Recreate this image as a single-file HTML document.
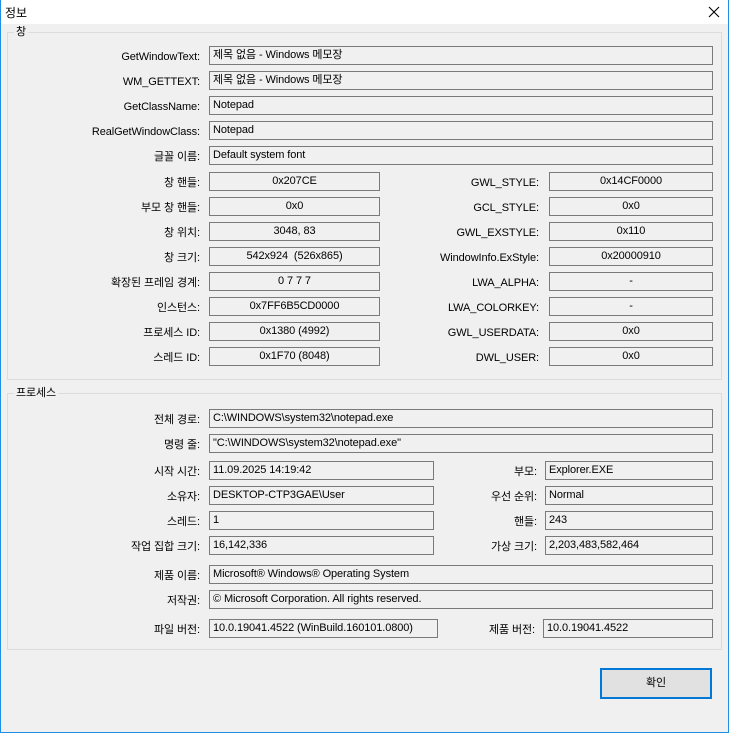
<!DOCTYPE html>
<html><head><meta charset="utf-8"><style>
*{margin:0;padding:0;box-sizing:border-box}
body{width:729px;height:733px;background:#f0f0f0;position:relative;overflow:hidden;font-family:"Liberation Sans","Noto Sans CJK KR",sans-serif;font-size:11px;letter-spacing:-0.1px;color:#000}
.win{position:absolute;left:0;top:0;width:729px;height:733px;border:1px solid #1e90e6;border-top:none}
.title{position:absolute;left:0;top:0;width:729px;height:24px;background:#fff;border-left:1px solid #1e90e6;border-right:1px solid #1e90e6}
.tt{position:absolute;left:4px;top:4px;font-size:12px}
.close{position:absolute;left:707px;top:6px}
.g{position:absolute;border:1px solid #dcdcdc}
.gt{position:absolute;background:#f0f0f0;padding:0 2px;top:-9px;left:6px;line-height:16px}
.f{position:absolute;border:1px solid #7a7a7a;height:19px;line-height:16px;padding-left:3px;white-space:nowrap;overflow:hidden}
.c{text-align:center;padding-left:0}
.l{position:absolute;text-align:right;line-height:16px;white-space:nowrap;margin-top:1px}
.btn{position:absolute;left:600px;top:668px;width:112px;height:31px;border:2px solid #0078d7;background:#e1e1e1;text-align:center;line-height:27px}
</style></head><body>
<div class="title"><span class="tt">정보</span><svg class="close" width="12" height="12" viewBox="0 0 12 12"><path d="M1 1L11 11M11 1L1 11" stroke="#000" stroke-width="1.1" fill="none"/></svg></div>
<div class="win"></div>

<div class="g" style="left:7px;top:32px;width:715px;height:348px"><div class="gt">창</div></div>
<div class="g" style="left:7px;top:393px;width:715px;height:257px"><div class="gt">프로세스</div></div>

<div class="l" style="right:529px;top:48px">GetWindowText:</div><div class="f" style="left:209px;top:46px;width:504px">제목 없음 - Windows 메모장</div>
<div class="l" style="right:529px;top:73px">WM_GETTEXT:</div><div class="f" style="left:209px;top:71px;width:504px">제목 없음 - Windows 메모장</div>
<div class="l" style="right:529px;top:98px">GetClassName:</div><div class="f" style="left:209px;top:96px;width:504px">Notepad</div>
<div class="l" style="right:529px;top:123px">RealGetWindowClass:</div><div class="f" style="left:209px;top:121px;width:504px">Notepad</div>
<div class="l" style="right:529px;top:148px">글꼴 이름:</div><div class="f" style="left:209px;top:146px;width:504px">Default system font</div>

<div class="l" style="right:529px;top:174px">창 핸들:</div><div class="f c" style="left:209px;top:172px;width:171px">0x207CE</div>
<div class="l" style="right:529px;top:199px">부모 창 핸들:</div><div class="f c" style="left:209px;top:197px;width:171px">0x0</div>
<div class="l" style="right:529px;top:224px">창 위치:</div><div class="f c" style="left:209px;top:222px;width:171px">3048, 83</div>
<div class="l" style="right:529px;top:249px">창 크기:</div><div class="f c" style="left:209px;top:247px;width:171px">542x924&nbsp; (526x865)</div>
<div class="l" style="right:529px;top:274px">확장된 프레임 경계:</div><div class="f c" style="left:209px;top:272px;width:171px">0 7 7 7</div>
<div class="l" style="right:529px;top:299px">인스턴스:</div><div class="f c" style="left:209px;top:297px;width:171px">0x7FF6B5CD0000</div>
<div class="l" style="right:529px;top:324px">프로세스 ID:</div><div class="f c" style="left:209px;top:322px;width:171px">0x1380 (4992)</div>
<div class="l" style="right:529px;top:349px">스레드 ID:</div><div class="f c" style="left:209px;top:347px;width:171px">0x1F70 (8048)</div>

<div class="l" style="right:190px;top:174px">GWL_STYLE:</div><div class="f c" style="left:549px;top:172px;width:164px">0x14CF0000</div>
<div class="l" style="right:190px;top:199px">GCL_STYLE:</div><div class="f c" style="left:549px;top:197px;width:164px">0x0</div>
<div class="l" style="right:190px;top:224px">GWL_EXSTYLE:</div><div class="f c" style="left:549px;top:222px;width:164px">0x110</div>
<div class="l" style="right:190px;top:249px">WindowInfo.ExStyle:</div><div class="f c" style="left:549px;top:247px;width:164px">0x20000910</div>
<div class="l" style="right:190px;top:274px">LWA_ALPHA:</div><div class="f c" style="left:549px;top:272px;width:164px">-</div>
<div class="l" style="right:190px;top:299px">LWA_COLORKEY:</div><div class="f c" style="left:549px;top:297px;width:164px">-</div>
<div class="l" style="right:190px;top:324px">GWL_USERDATA:</div><div class="f c" style="left:549px;top:322px;width:164px">0x0</div>
<div class="l" style="right:190px;top:349px">DWL_USER:</div><div class="f c" style="left:549px;top:347px;width:164px">0x0</div>

<div class="l" style="right:529px;top:411px">전체 경로:</div><div class="f" style="left:209px;top:409px;width:504px">C:\WINDOWS\system32\notepad.exe</div>
<div class="l" style="right:529px;top:436px">명령 줄:</div><div class="f" style="left:209px;top:434px;width:504px">"C:\WINDOWS\system32\notepad.exe"</div>
<div class="l" style="right:529px;top:463px">시작 시간:</div><div class="f" style="left:209px;top:461px;width:225px">11.09.2025 14:19:42</div>
<div class="l" style="right:529px;top:488px">소유자:</div><div class="f" style="left:209px;top:486px;width:225px">DESKTOP-CTP3GAE\User</div>
<div class="l" style="right:529px;top:513px">스레드:</div><div class="f" style="left:209px;top:511px;width:225px">1</div>
<div class="l" style="right:529px;top:538px">작업 집합 크기:</div><div class="f" style="left:209px;top:536px;width:225px">16,142,336</div>
<div class="l" style="right:192px;top:463px">부모:</div><div class="f" style="left:545px;top:461px;width:168px">Explorer.EXE</div>
<div class="l" style="right:192px;top:488px">우선 순위:</div><div class="f" style="left:545px;top:486px;width:168px">Normal</div>
<div class="l" style="right:192px;top:513px">핸들:</div><div class="f" style="left:545px;top:511px;width:168px">243</div>
<div class="l" style="right:192px;top:538px">가상 크기:</div><div class="f" style="left:545px;top:536px;width:168px">2,203,483,582,464</div>
<div class="l" style="right:529px;top:567px">제품 이름:</div><div class="f" style="left:209px;top:565px;width:504px">Microsoft® Windows® Operating System</div>
<div class="l" style="right:529px;top:592px">저작권:</div><div class="f" style="left:209px;top:590px;width:504px">© Microsoft Corporation. All rights reserved.</div>
<div class="l" style="right:529px;top:621px">파일 버전:</div><div class="f" style="left:209px;top:619px;width:229px">10.0.19041.4522 (WinBuild.160101.0800)</div>
<div class="l" style="right:194px;top:621px">제품 버전:</div><div class="f" style="left:543px;top:619px;width:170px">10.0.19041.4522</div>

<div class="btn">확인</div>
</body></html>
